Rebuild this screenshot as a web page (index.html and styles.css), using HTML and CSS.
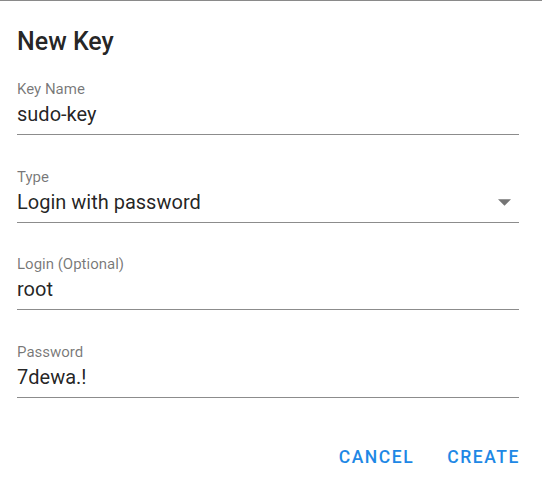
FILE: index.html
```html
<!DOCTYPE html>
<html>
<head>
  <title>New Key</title>
  <link rel="stylesheet" href="styles.css">
</head>
<body>
  <div class="dialog">
    <h2 class="dialog-title">New Key</h2>

    <div class="field">
      <label class="field-label">Key Name</label>
      <div class="field-input">sudo-key</div>
    </div>

    <div class="field">
      <label class="field-label">Type</label>
      <div class="field-input select">
        <span>Login with password</span>
        <svg class="arrow" width="13" height="7" viewBox="0 0 12.5 6.25">
          <path d="M0 0l6.25 6.25 6.25-6.25z" fill="#757575" />
        </svg>
      </div>
    </div>

    <div class="field">
      <label class="field-label">Login (Optional)</label>
      <div class="field-input">root</div>
    </div>

    <div class="field">
      <label class="field-label">Password</label>
      <div class="field-input">7dewa.!</div>
    </div>

    <div class="actions">
      <button>Cancel</button>
      <button>Create</button>
    </div>
  </div>
</body>
</html>
```

FILE: styles.css
```css
body {
  margin: 0;
  font-family: Roboto, "Liberation Sans", sans-serif;
  background: white;
}

.dialog {
  border-top: 1px solid #8a8a8a;
  padding: 21px 23px 0 17px;
}

.dialog-title {
  margin: 0 0 21px 0;
  font-size: 25px;
  font-weight: 500;
  line-height: 40px;
  color: rgba(0, 0, 0, 0.87);
}

.field {
  display: flex;
  flex-direction: column;
  margin-top: 35.5px;
}

.dialog-title + .field {
  margin-top: 0;
}

.field-label {
  font-size: 15px;
  line-height: 13px;
  margin-bottom: 6px;
  color: rgba(0, 0, 0, 0.54);
}

.field-input {
  font-size: 20px;
  line-height: 24px;
  color: rgba(0, 0, 0, 0.87);
  padding-bottom: 8px;
  border-bottom: 1px solid rgba(0, 0, 0, 0.45);
}

.select {
  display: flex;
  justify-content: space-between;
  align-items: center;
}

.arrow {
  margin-top: 2px;
  margin-right: 8px;
}

.actions {
  display: flex;
  justify-content: flex-end;
  gap: 13px;
  padding-top: 37px;
  margin-right: -11px;
}

button {
  font-family: inherit;
  font-size: 17.5px;
  font-weight: 500;
  letter-spacing: 1.56px;
  line-height: 30px;
  text-transform: uppercase;
  color: #1e88e5;
  background: none;
  border: none;
  padding: 7.5px 10px;
  cursor: pointer;
}
```
